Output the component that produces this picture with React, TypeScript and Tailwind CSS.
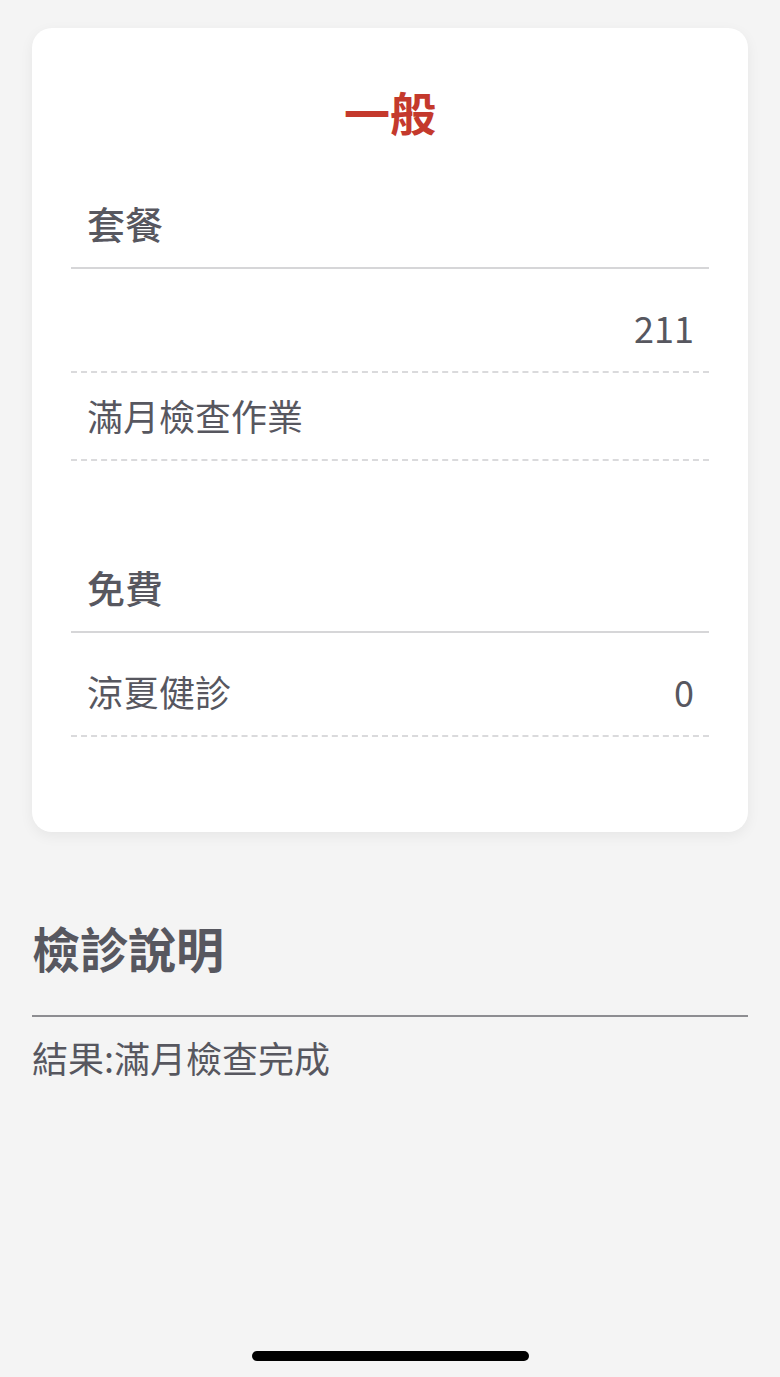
import React from 'react';

type Row = { name: string; value: string; first?: boolean };
type Section = { title: string; rows: Row[] };

const sections: Section[] = [
    {
        title: '套餐',
        rows: [
            { name: '', value: '211', first: true },
            { name: '滿月檢查作業', value: '' },
        ],
    },
    {
        title: '免費',
        rows: [{ name: '涼夏健診', value: '0', first: true }],
    },
];

const font = { fontFamily: '"Noto Sans CJK TC", "Noto Sans", sans-serif' };

const App: React.FC = () => {
    return (
        <div className="min-h-[1377px] bg-[#f4f4f4] flex flex-col text-[#57575f]" style={font}>
            <div className="mt-[28px] mx-[32px] bg-white rounded-[20px] shadow-[0_4px_14px_rgba(0,0,0,0.06)] px-[39px] pt-[60px] pb-[95px]">
                <h1 className="text-[46px] leading-[46px] font-bold text-[#c4392c] text-center">一般</h1>
                {sections.map((section, i) => (
                    <div key={section.title} className={i === 0 ? 'mt-[70px]' : 'mt-[107px]'}>
                        <div className="px-[16px] pb-[25px] border-b-2 border-[#d6d6d8]">
                            <h2 className="text-[38px] leading-[38px] font-medium">{section.title}</h2>
                        </div>
                        {section.rows.map((row, j) => (
                            <div
                                key={j}
                                className={`flex items-center justify-between pl-[16px] pr-[15px] pb-[26px] border-b-2 border-dashed border-[#dadadc] ${
                                    row.first ? 'pt-[40px]' : 'pt-[24px]'
                                }`}
                            >
                                <span className="text-[36px] leading-[36px]">{row.name}</span>
                                <span className="text-[36px] leading-[36px]">{row.value}</span>
                            </div>
                        ))}
                    </div>
                ))}
            </div>

            <div className="mx-[32px] mt-[91px]">
                <h2 className="text-[48px] leading-[48px] font-bold pb-[44px] border-b-2 border-[#8d8d91]">檢診說明</h2>
                <p className="mt-[22px] text-[36px] leading-[36px]">結果:滿月檢查完成</p>
            </div>

            <div className="mt-auto mb-[16px] mx-auto w-[277px] h-[10px] rounded-full bg-black" />
        </div>
    );
};

export default App;
